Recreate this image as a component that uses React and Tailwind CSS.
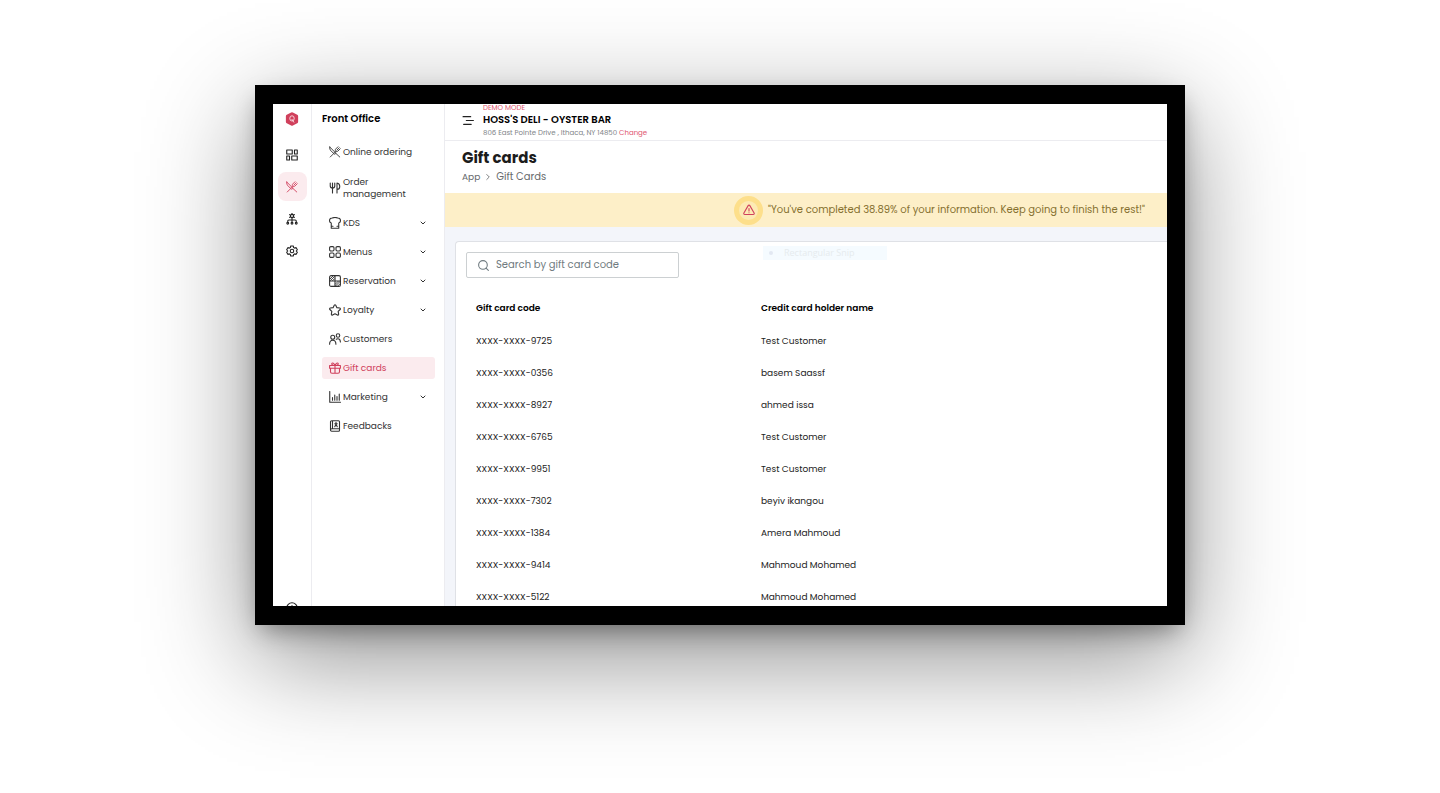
import { useState } from 'react'
import { ChevronDown, ChevronRight, Search } from 'lucide-react'

const Svg = ({ size = 12, children, className = '' }) => (
  <svg width={size} height={size} viewBox="0 0 24 24" fill="none" stroke="currentColor" strokeWidth="2.2"
    strokeLinecap="round" strokeLinejoin="round" className={`shrink-0 ${className}`} aria-hidden="true">
    {children}
  </svg>
)

const Logo = () => (
  <svg width="14" height="14" viewBox="0 0 24 24" aria-hidden="true">
    <path d="M10.500 0.800Q12 0 13.500 0.800L21 4.800Q22.500 5.600 22.500 7.400v9.200q0 1.800-1.500 2.600l-7.500 4q-1.500.8-3 0L3 19.200Q1.500 18.400 1.500 16.600V7.400Q1.500 5.600 3 4.800Z" fill="#d0405c" />
    <ellipse cx="12" cy="11" rx="3.800" ry="4.500" fill="none" stroke="#fbdfe4" strokeWidth="1.600" />
    <path d="M11.500 12 15.500 18" stroke="#fbdfe4" strokeWidth="1.600" />
  </svg>
)

const UtensilsCrossed = ({ size }) => (
  <Svg size={size}>
    <path strokeWidth="1.800" d="M1.500 2 14 14.500l-2.500 2L4.500 10.500C2 8 1 5 1.500 2ZM14.500 15.500l7 6.500M2.500 22 14.500 10M18 1.500 13.500 6c-1.500 1.500-1 3.500 0 4.500s3 1 4.500-.5L22.500 5.500M20.500 3.500 16 8" />
  </Svg>
)

const Dashboard = ({ size }) => (
  <Svg size={size}>
    <path d="M1.500 2h11v8h-11zM17 2h5.500v8H17zM1.500 14H7v8H1.500zM11.500 14h11v8h-11z" />
  </Svg>
)

const OrgGear = ({ size }) => (
  <Svg size={size}>
    <circle cx="12" cy="6" r="3.200" strokeWidth="2.600" />
    <path d="M12 .8v1M7.200 3.200l1 .6M16.800 3.200l-1 .6M7.200 8.800l1-.6M16.800 8.800l-1-.6M12 10v7M3.500 17v-1c0-1.500.8-2 2-2h13c1.200 0 2 .5 2 2v1" />
    <circle cx="3.500" cy="20.500" r="1.800" />
    <circle cx="12" cy="20.500" r="1.800" />
    <circle cx="20.500" cy="20.500" r="1.800" />
  </Svg>
)

const Gear = ({ size }) => (
  <Svg size={size}>
    <path d="M9.500 2h5l.8 3 2 1.200 3-.9 2.400 4.200L20.500 12l2.200 2.500-2.400 4.200-3-.9-2 1.200-.8 3h-5l-.8-3-2-1.200-3 .9-2.400-4.200L3.500 12 1.300 9.500l2.400-4.200 3 .9 2-1.200Z" />
    <circle cx="12" cy="12" r="3.500" />
  </Svg>
)

const ForkKnife = ({ size }) => (
  <Svg size={size}>
    <path d="M2.500 2v6c0 3 1.500 4 4.500 4s4.500-1 4.500-4V2M7 2v20M16 22V2c4 .5 5.500 3.500 5.500 7s-1.500 6-5.500 6" />
  </Svg>
)

const Toque = ({ size }) => (
  <Svg size={size}>
    <path d="M4.500 22.500V12C2.300 11.500 1 9.500 1 7c0-3 2.300-5 5.500-5 1.500-.8 3.500-1 5.500-1s4 .2 5.500 1C20.700 2 23 4 23 7c0 2.500-1.300 4.500-3.500 5v10.500ZM4.500 18.500h3.500M19.500 18.500H16" />
  </Svg>
)

const Grid = ({ size }) => (
  <Svg size={size}>
    <rect x="1.200" y="1.200" width="8.800" height="8.800" rx="2.500" />
    <rect x="14" y="1.200" width="8.800" height="8.800" rx="2.500" />
    <rect x="1.200" y="14" width="8.800" height="8.800" rx="2.500" />
    <rect x="14" y="14" width="8.800" height="8.800" rx="2.500" />
  </Svg>
)

const TableMap = ({ size }) => (
  <Svg size={size}>
    <rect x="1.200" y="1.200" width="21.600" height="21.600" rx="3" />
    <path d="M1.200 12h21.600M12 1.200v21.600" />
    <path d="M2 8l6-6M3 11l8-8M7 11.500l4-4M13 18l5.500-5.500M13 22l9-9M17 22.500l5-5" strokeWidth="1.800" />
  </Svg>
)

const StarIcon = ({ size }) => (
  <Svg size={size}>
    <path d="M12 1.500c.7 0 1.200.5 1.500 1l2.300 4.800 5.500.8c1.500.3 2 1.900 1 2.900l-4 3.900 1 5.500c.2 1.400-1.200 2.400-2.400 1.700L12 19.600l-4.900 2.500c-1.200.7-2.600-.3-2.400-1.700l1-5.500-4-3.900c-1-1-.5-2.600 1-2.900l5.500-.8 2.300-4.800c.3-.5.8-1 1.500-1Z" />
  </Svg>
)

const People = ({ size }) => (
  <Svg size={size}>
    <circle cx="7.500" cy="8.500" r="4" />
    <path d="M1.200 22.500c0-5 2.300-8 6.300-8s6.300 3 6.300 8" />
    <circle cx="18" cy="5" r="3.500" />
    <path d="M14.500 12.500c3.500-2.500 8.300-.5 8.300 5.500" />
  </Svg>
)

const GiftBox = ({ size }) => (
  <Svg size={size}>
    <path d="M1.200 7h21.600v5.500H1.200ZM3 12.500h18v7c0 2-1 3-3 3H6c-2 0-3-1-3-3ZM12 7v15.500M12 7C8 7 5.500 5.500 5.500 3.500S9.500.5 12 7c2.500-6.500 6.500-5.500 6.500-3.500S16 7 12 7Z" />
  </Svg>
)

const Bars = ({ size }) => (
  <Svg size={size}>
    <path d="M1.500 1v21.500H23M7 18.500V13M11.500 18.500V8M16 18.500V11M20.500 18.500V6" />
  </Svg>
)

const Book = ({ size }) => (
  <Svg size={size}>
    <path d="M5.500 1.500H19c1.300 0 2 .7 2 2V20.500c0 1.300-.7 2-2 2H5.500C3.500 22.500 3 21 3 19.500V4c0-1.500 1-2.500 2.500-2.500ZM3 19.500c0-1.500 1-2 2.500-2H21M7 1.500v16" />
    <path d="M14 4.500v4M11.500 13.500l2.500-5 2.500 5M11.500 7.500h5" />
  </Svg>
)

const HelpCircle = ({ size }) => (
  <Svg size={size}>
    <circle cx="12" cy="12" r="10.500" />
    <path d="M12 7v5M12 16.500v.1" />
  </Svg>
)

const railItems = [
  { label: 'Dashboard', icon: Dashboard },
  { label: 'Front Office', icon: UtensilsCrossed, active: true },
  { label: 'Organization', icon: OrgGear },
  { label: 'Settings', icon: Gear },
]

const menuItems = [
  { label: 'Online ordering', icon: UtensilsCrossed },
  { label: 'Order management', icon: ForkKnife, tall: true },
  { label: 'KDS', icon: Toque, expandable: true },
  { label: 'Menus', icon: Grid, expandable: true },
  { label: 'Reservation', icon: TableMap, expandable: true },
  { label: 'Loyalty', icon: StarIcon, expandable: true },
  { label: 'Customers', icon: People },
  { label: 'Gift cards', icon: GiftBox, active: true },
  { label: 'Marketing', icon: Bars, expandable: true },
  { label: 'Feedbacks', icon: Book },
]

const cards = [
  { code: 'XXXX-XXXX-9725', holder: 'Test Customer' },
  { code: 'XXXX-XXXX-0356', holder: 'basem Saassf' },
  { code: 'XXXX-XXXX-8927', holder: 'ahmed issa' },
  { code: 'XXXX-XXXX-6765', holder: 'Test Customer' },
  { code: 'XXXX-XXXX-9951', holder: 'Test Customer' },
  { code: 'XXXX-XXXX-7302', holder: 'beyiv ikangou' },
  { code: 'XXXX-XXXX-1384', holder: 'Amera Mahmoud' },
  { code: 'XXXX-XXXX-9414', holder: 'Mahmoud Mohamed' },
  { code: 'XXXX-XXXX-5122', holder: 'Mahmoud Mohamed' },
]

const Rail = () => (
  <nav className="flex w-[39px] shrink-0 flex-col items-center border-r border-[#ececf0] pt-2 text-[#222]">
    <Logo />
    <div className="mt-[14px] flex flex-col gap-[3px]">
      {railItems.map(({ label, icon: Icon, active }) => (
        <button key={label} aria-label={label}
          className={`flex size-[29px] items-center justify-center rounded-lg ${active ? 'bg-[#fbebee] text-[#d0405c]' : ''}`}>
          <Icon size={12} />
        </button>
      ))}
    </div>
    <button aria-label="Help" className="mt-auto -mb-2"><HelpCircle size={12} /></button>
  </nav>
)

const Sidebar = () => (
  <aside className="flex w-[133px] shrink-0 flex-col border-r border-[#ececf0] pt-2 pr-[9px] pl-[10px]">
    <h2 className="text-[10px] leading-[13px] font-semibold text-black">Front Office</h2>
    <ul className="mt-4 flex flex-col gap-[7px]">
      {menuItems.map(({ label, icon: Icon, active, expandable, tall }) => (
        <li key={label}>
          <button className={`flex w-full items-center gap-[2px] rounded-[3px] pr-2 pl-[7px] text-left text-[9px] leading-3 ${tall ? 'h-[35px]' : 'h-[22px]'} ${active ? 'bg-[#fbebee] text-[#d0405c]' : 'text-[#333]'}`}>
            <Icon size={12} />
            <span className={tall ? 'w-[64px]' : ''}>{label}</span>
            {expandable && <ChevronDown size={8} strokeWidth={3} className="ml-auto" />}
          </button>
        </li>
      ))}
    </ul>
  </aside>
)

const TopBar = () => (
  <header className="flex h-[37px] shrink-0 items-center gap-2 border-b border-[#ececf0] bg-white pb-1 pl-[17px]">
    <button aria-label="Toggle menu" className="text-[#222]">
      <Svg size={13}>
        <path d="M2 5h14M8 12h13M3 19h14" />
      </Svg>
    </button>
    <div>
      <p className="text-[7px] leading-[9px] text-[#e0566f]">DEMO MODE</p>
      <p className="text-[10px] leading-4 font-semibold text-black">HOSS'S DELI - OYSTER BAR</p>
      <p className="text-[7px] leading-[9px] text-[#7f8589]">
        806 East Pointe Drive , Ithaca, NY 14850 <a href="#change" className="text-[#e0566f]">Change</a>
      </p>
    </div>
  </header>
)

const Banner = () => (
  <div className="flex h-[34px] shrink-0 items-center justify-end gap-[5px] bg-[#fdefc8] pr-[22px]">
    <span className="flex size-[29px] items-center justify-center rounded-full border-[5px] border-[#fddf8b] bg-[#fdeab4] text-[#d0405c]">
      <Svg size={12}>
        <path d="M10.300 3.300 1.800 18c-.8 1.400.2 3 1.700 3h17c1.500 0 2.500-1.600 1.700-3L13.700 3.300c-.8-1.300-2.600-1.300-3.400 0ZM12 9v5M12 17.500v.1" />
      </Svg>
    </span>
    <p className="text-[10px] leading-4 text-[#85702f]">"You've completed 38.89% of your information. Keep going to finish the rest!"</p>
  </div>
)

const GiftCards = () => {
  const [query, setQuery] = useState('')
  const shown = cards.filter(c => c.code.toLowerCase().includes(query.toLowerCase()))

  return (
    <section className="relative min-h-0 flex-1 rounded-tl-sm border-t border-l border-[#dfe1e6] bg-white pt-[10px] pl-[10px]">
      <label className="flex h-[26px] w-[213px] items-center gap-[6px] rounded-[2px] border border-[#ccd0d2] pl-[10px]">
        <Search size={13} className="shrink-0 text-[#6f7b80]" />
        <input type="text" value={query} onChange={(e) => setQuery(e.target.value)} aria-label="Search by gift card code"
          placeholder="Search by gift card code" className="min-w-0 flex-1 text-[10px] leading-4 outline-none placeholder:text-[#6f7b80]" />
      </label>

      <table className="mt-3 w-full table-fixed text-left">
        <thead>
          <tr className="h-[35px] text-[9px] leading-3 text-black">
            <th className="w-[285px] pl-[10px] font-semibold">Gift card code</th>
            <th className="pl-[10px] font-semibold">Credit card holder name</th>
          </tr>
        </thead>
        <tbody>
          {shown.map((card, i) => (
            <tr key={i} className="h-8 text-[9px] leading-3 text-[#222]">
              <td className="pl-[10px]">{card.code}</td>
              <td className="pl-[10px]">{card.holder}</td>
            </tr>
          ))}
        </tbody>
      </table>

      <div className="absolute top-1 left-[307px] flex h-[14px] w-[124px] items-center gap-[11px] bg-[#f5fbff] pl-[6px] font-['Open_Sans'] text-[9px] leading-3 text-[#e6ebee]">
        <span className="size-1 rounded-full bg-[#e2e8f2]" />
        Rectangular Snip
      </div>
    </section>
  )
}

const App = () => (
  <div className="min-h-screen overflow-hidden bg-white pt-[85px] pb-20 font-[Poppins,Inter,sans-serif]">
    <div className="mx-auto flex aspect-[31/18] w-full max-w-[930px] overflow-hidden border-x-[18px] border-y-[19px] border-black bg-white shadow-[0_10px_24px_-6px_rgba(0,0,0,0.4),0_32px_100px_rgba(0,0,0,0.45)]">
      <Rail />
      <Sidebar />
      <main className="flex min-w-0 flex-1 flex-col bg-[#f3f5fa]">
        <TopBar />
        <div className="shrink-0 bg-white pt-[7px] pb-[10px] pl-[17px]">
          <h1 className="text-[15px] leading-5 font-bold text-[#1c1c1c]">Gift cards</h1>
          <nav className="mt-[3px] flex items-center gap-[3px] text-[10px] leading-3 text-[#66696b]">
            <a href="#app" className="text-[9px]">App</a>
            <ChevronRight size={10} />
            <span>Gift Cards</span>
          </nav>
        </div>
        <Banner />
        <div className="flex min-h-0 flex-1 flex-col pt-[14px] pl-[10px]">
          <GiftCards />
        </div>
      </main>
    </div>
  </div>
)

export default App
